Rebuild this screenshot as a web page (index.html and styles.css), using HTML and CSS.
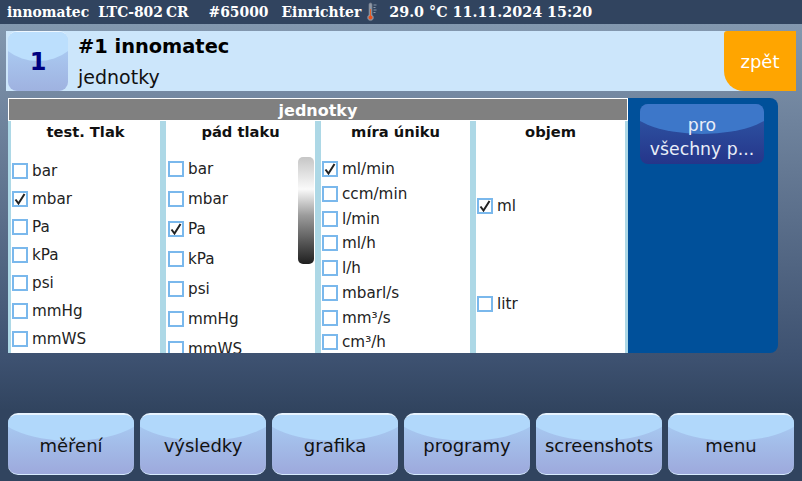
FILE: index.html
```html
<!DOCTYPE html>
<html lang="cs">
<head>
<meta charset="utf-8">
<title>jednotky</title>
<link rel="stylesheet" href="styles.css">
</head>
<body>
<header class="topbar">
  <span class="t-a">innomatec</span><span class="t-b">LTC-802</span><span class="t-c">CR</span><span class="t-d">#65000</span><span class="t-e">Einrichter</span>
  <svg class="thermo" width="12" height="20" viewBox="0 0 12 20"><path d="M3 2.500a1.500 1.500 0 0 1 3 0V13a3 3 0 1 1-3 0z" fill="#8f98a6" stroke="#77808e" stroke-width=".7"/><rect x="4" y="7" width="1" height="7" fill="#e2622a"/><circle cx="4.500" cy="15.500" r="2" fill="#e8501c"/><path d="M7.500 3h3M7.500 5.500h2M7.500 8h3M7.500 10.500h2" stroke="#8a97a9" stroke-width="1"/></svg>
  <span class="t-f">29.0 °C 11.11.2024 15:20</span>
</header>
<section class="head">
  <div class="num glossy"><span>1</span></div>
  <div class="head-text">
    <div class="h-title">#1 innomatec</div>
    <div class="h-sub">jednotky</div>
  </div>
  <div class="back">zpět</div>
</section>
<main class="main">
  <div class="table">
    <div class="table-title">jednotky</div>
    <div class="cols">
      <div class="col col-a">
        <div class="col-h">test. Tlak</div>
        <div class="list">
          <div class="row"><i class="box"></i>bar</div>
          <div class="row"><i class="box on"><svg viewBox="0 0 12 12"><path d="M1.500 6.500L4.500 10.500L10.500 1"/></svg></i>mbar</div>
          <div class="row"><i class="box"></i>Pa</div>
          <div class="row"><i class="box"></i>kPa</div>
          <div class="row"><i class="box"></i>psi</div>
          <div class="row"><i class="box"></i>mmHg</div>
          <div class="row"><i class="box"></i>mmWS</div>
        </div>
      </div>
      <div class="col col-b">
        <div class="col-h">pád tlaku</div>
        <div class="list">
          <div class="row"><i class="box"></i>bar</div>
          <div class="row"><i class="box"></i>mbar</div>
          <div class="row"><i class="box on"><svg viewBox="0 0 12 12"><path d="M1.500 6.500L4.500 10.500L10.500 1"/></svg></i>Pa</div>
          <div class="row"><i class="box"></i>kPa</div>
          <div class="row"><i class="box"></i>psi</div>
          <div class="row"><i class="box"></i>mmHg</div>
          <div class="row"><i class="box"></i>mmWS</div>
        </div>
        <div class="scroll"></div>
      </div>
      <div class="col col-c">
        <div class="col-h">míra úniku</div>
        <div class="list">
          <div class="row"><i class="box on"><svg viewBox="0 0 12 12"><path d="M1.500 6.500L4.500 10.500L10.500 1"/></svg></i>ml/min</div>
          <div class="row"><i class="box"></i>ccm/min</div>
          <div class="row"><i class="box"></i>l/min</div>
          <div class="row"><i class="box"></i>ml/h</div>
          <div class="row"><i class="box"></i>l/h</div>
          <div class="row"><i class="box"></i>mbarl/s</div>
          <div class="row"><i class="box"></i>mm³/s</div>
          <div class="row"><i class="box"></i>cm³/h</div>
        </div>
      </div>
      <div class="col col-d">
        <div class="col-h">objem</div>
        <div class="list">
          <div class="row"><i class="box on"><svg viewBox="0 0 12 12"><path d="M1.500 6.500L4.500 10.500L10.500 1"/></svg></i>ml</div>
          <div class="row"><i class="box"></i>litr</div>
        </div>
      </div>
    </div>
  </div>
  <aside class="side">
    <div class="all"><span>pro</span><span>všechny p...</span></div>
  </aside>
</main>
<nav class="nav">
  <div class="btn glossy"><span>měření</span></div>
  <div class="btn glossy"><span>výsledky</span></div>
  <div class="btn glossy"><span>grafika</span></div>
  <div class="btn glossy"><span>programy</span></div>
  <div class="btn glossy"><span>screenshots</span></div>
  <div class="btn glossy"><span>menu</span></div>
</nav>
</body>
</html>
```
FILE: styles.css
```css
* { box-sizing: border-box; }
html, body { margin: 0; height: 100%; }
body {
  width: 802px;
  height: 481px;
  overflow: hidden;
  font-family: "DejaVu Sans", sans-serif;
  color: #222;
  background: linear-gradient(180deg, #8398af 24px, #6f839d 120px, #3d5170 360px, #31445f 410px);
  display: flex;
  flex-direction: column;
}
.topbar {
  height: 24px;
  flex: none;
  background: #31445f;
  color: #fff;
  font-family: "DejaVu Serif", serif;
  font-weight: bold;
  font-size: 13.900px;
  display: flex;
  align-items: center;
  padding-left: 7px;
  white-space: nowrap;
}
.t-b { margin-left: 9px; }
.t-c { margin-left: 3px; }
.t-d { margin-left: 20px; }
.t-e { margin-left: 13px; }
.thermo { margin-left: 5px; }
.t-f { margin-left: 11px; font-size: 14.300px; }
.head {
  margin: 7px 6px 0;
  height: 60px;
  flex: none;
  background: #cce6fb;
  display: flex;
  padding-left: 2px;
}
.glossy { position: relative; overflow: hidden; }
.glossy::before {
  content: "";
  position: absolute;
  left: -12%;
  right: -12%;
  top: -44px;
  height: 70px;
  border-radius: 50%;
  background: #b1d8fb;
}
.glossy > span { position: relative; }
.num {
  width: 60px;
  height: 60px;
  border-radius: 9px;
  background: linear-gradient(180deg, #aed3f8, #9fb2e0);
  border-top: 1px solid #eef7ff;
  display: flex;
  align-items: center;
  justify-content: center;
  color: #000080;
  font-weight: bold;
  font-size: 24px;
}
.num::before { left: -20%; right: -20%; top: -38px; height: 67px; background: #bcdffd; }
.head-text { flex: 1; padding-left: 10px; color: #000; }
.h-title { font-weight: bold; font-size: 19.400px; line-height: 22px; margin-top: 5px; }
.h-sub { font-size: 19px; line-height: 22px; margin-top: 8px; color: #111; }
.back {
  width: 72px;
  background: #ffa500;
  border-radius: 3px 0 0 20px;
  color: #fff;
  font-size: 18px;
  display: flex;
  align-items: center;
  justify-content: center;
}
.main {
  margin: 7px 0 0 8px;
  height: 255px;
  flex: none;
  width: 770px;
  display: flex;
}
.table { width: 620px; display: flex; flex-direction: column; }
.table-title {
  height: 23px;
  flex: none;
  background: #808080;
  border: 1px solid #fff;
  color: #fff;
  font-weight: bold;
  font-size: 16px;
  line-height: 24px;
  text-align: center;
}
.cols { flex: 1; display: flex; min-height: 0; }
.col {
  position: relative;
  width: 155px;
  background: #fff;
  border-left: 3px solid #add8e6;
  border-right: 3px solid #add8e6;
  overflow: hidden;
}
.col-h {
  height: 20px;
  color: #111;
  font-weight: bold;
  font-size: 14.700px;
  line-height: 21px;
  text-align: center;
}
.list { display: flex; flex-direction: column; padding-left: 1px; }
.row {
  display: flex;
  align-items: center;
  font-size: 15.200px;
  height: 16px;
  flex: none;
  white-space: nowrap;
}
.box {
  width: 16px;
  height: 16px;
  flex: none;
  margin-right: 4px;
  border: 2px solid #7ab8ec;
  background: #fff;
  display: flex;
  align-items: center;
  justify-content: center;
}
.box svg { width: 12px; height: 12px; }
.box path { fill: none; stroke: #222; stroke-width: 2; }
.col-a .list { padding-top: 22px; gap: 12px; }
.col-b .list { padding-top: 20px; gap: 14px; padding-left: 2px; }
.col-c .list { padding-top: 20px; gap: 8.750px; padding-left: 1px; }
.col-d .list { padding-top: 57px; gap: 82px; padding-left: 1px; }
.scroll {
  position: absolute;
  left: 132px;
  top: 36px;
  width: 16px;
  height: 107px;
  border-radius: 5px;
  background: linear-gradient(180deg, #c6c6c6, #fafafa 30%, #9a9a9a 55%, #1f1f1f);
}
.side {
  width: 150px;
  background: #00509a;
  border-radius: 0 8px 8px 0;
  padding: 6px 0 0 12px;
}
.all {
  position: relative;
  overflow: hidden;
  width: 124px;
  height: 60px;
  border-radius: 8px;
  background: linear-gradient(180deg, #2f5aa8, #25358a);
  color: #e9eef8;
  font-size: 17.300px;
  line-height: 24px;
  display: flex;
  flex-direction: column;
  align-items: center;
  justify-content: center;
  padding-top: 6px;
}
.all::before {
  content: "";
  position: absolute;
  left: -12%;
  right: -12%;
  top: -34px;
  height: 64px;
  border-radius: 50%;
  background: #3d77c9;
}
.all span { position: relative; }
.nav {
  margin: 60px 0 0 8px;
  display: flex;
  gap: 6px;
}
.btn {
  width: 126px;
  height: 62px;
  border-radius: 10px;
  background: linear-gradient(180deg, #a9cff5, #9da9dc);
  border-top: 2px solid #e8f4ff;
  border-bottom: 1px solid #d8ecff;
  display: flex;
  align-items: center;
  justify-content: center;
  color: #111;
  font-size: 18px;
  padding-top: 1px;
}
```
